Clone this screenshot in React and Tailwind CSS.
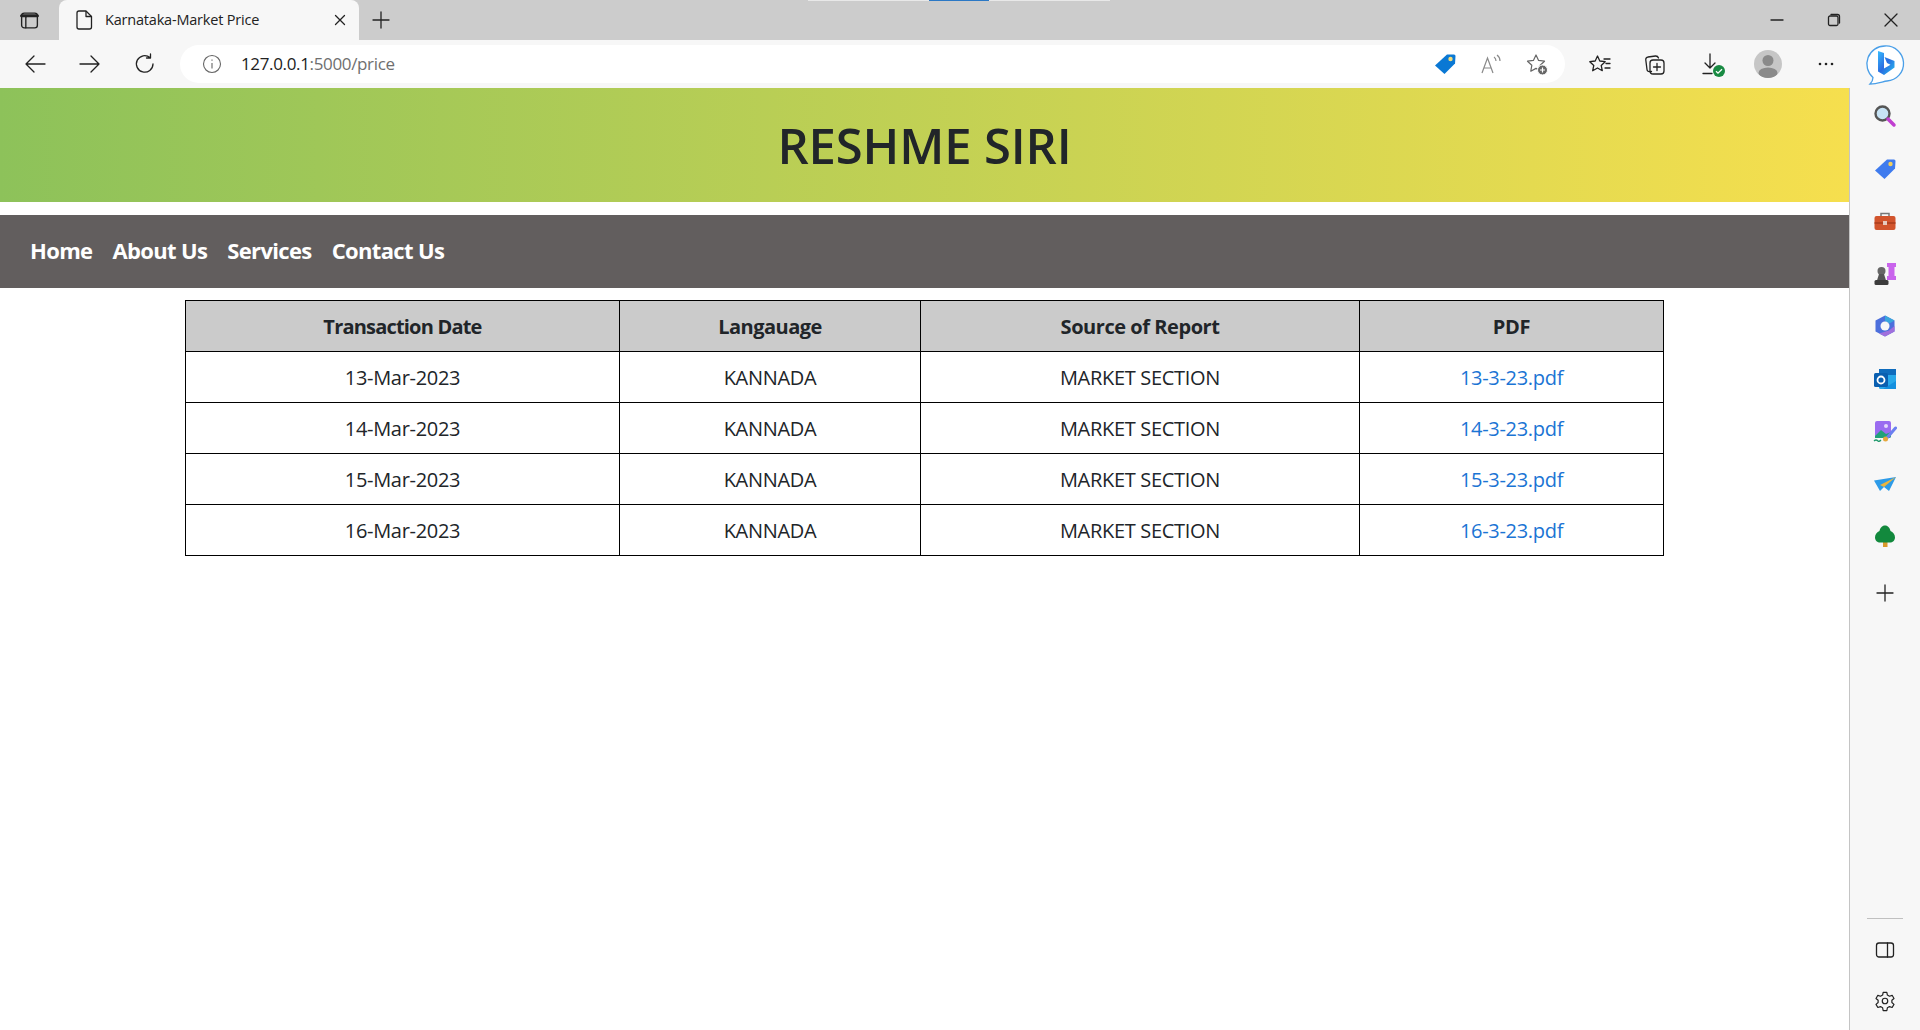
import React from "react";

const S = ({ children, w = 24, h = 24, vb = "0 0 24 24", className = "" }) => (
  <svg width={w} height={h} viewBox={vb} fill="none" stroke="#222" strokeWidth="1.3" strokeLinecap="round" strokeLinejoin="round" className={className}>
    {children}
  </svg>
);

const rows = [
  ["13-Mar-2023", "13-3-23.pdf"],
  ["14-Mar-2023", "14-3-23.pdf"],
  ["15-Mar-2023", "15-3-23.pdf"],
  ["16-Mar-2023", "16-3-23.pdf"],
];

const Ext = ({ children }) => (
  <div className="w-[24px] h-[24px] flex items-center justify-center">{children}</div>
);

export default function App() {
  return (
    <div className="w-[1920px] h-[1030px] overflow-hidden bg-white flex flex-col font-['Open_Sans','Noto_Sans',sans-serif]">
      {/* tab strip */}
      <div className="relative h-[40px] bg-[#cccccc] flex items-end shrink-0">
        <div className="absolute top-0 left-[808px] w-[302px] h-px bg-[#e8e8e8]" />
        <div className="absolute top-0 left-[929px] w-[60px] h-px bg-[#2b78c5]" />
        <div className="w-[59px] h-[40px] flex items-center justify-center">
          <S w={21} h={21} vb="0 0 20 20">
            <rect x="2.500" y="3" width="15" height="14" rx="2.500" />
            <path d="M2.500 5.500h15" strokeWidth="3" />
            <path d="M6.500 7v10" />
          </S>
        </div>
        <div className="w-[300px] h-[40px] bg-[#f7f7f7] rounded-t-[8px] flex items-center pl-[15px]">
          <svg width="21" height="24" viewBox="0 0 21 24" fill="none" stroke="#222" strokeWidth="1.300" strokeLinejoin="round">
            <path d="M5 3h7l5.500 5.500V19a2 2 0 0 1-2 2H5a2 2 0 0 1-2-2V5a2 2 0 0 1 2-2Z" />
            <path d="M12 3v5.500h5.500" />
          </svg>
          <span className="ml-[10px] text-[14.5px] text-[#222] tracking-[-0.2px] whitespace-nowrap">Karnataka-Market Price</span>
          <div className="ml-auto mr-[12px]">
            <S w={14} h={14} vb="0 0 14 14"><path d="M2.500 2.500l9 9M11.500 2.500l-9 9" /></S>
          </div>
        </div>
        <div className="h-[40px] flex items-center ml-[11px]">
          <S w={22} h={22} vb="0 0 22 22"><path d="M11 3v16M3 11h16" /></S>
        </div>
        <div className="ml-auto h-[40px] flex items-center gap-[43px] pr-[22px]">
          <S w={14} h={14} vb="0 0 14 14"><path d="M1 7h12" /></S>
          <S w={14} h={14} vb="0 0 14 14"><rect x="1.500" y="3" width="9.500" height="9.500" rx="1.500" /><path d="M4 1.500h6.500a2 2 0 0 1 2 2V10" /></S>
          <S w={14} h={14} vb="0 0 14 14"><path d="M1 1l12 12M13 1L1 13" /></S>
        </div>
      </div>

      {/* toolbar */}
      <div className="relative h-[48px] bg-[#f7f7f7] flex items-center shrink-0">
        <div className="flex items-center gap-[31px] pl-[23px]">
          <S w={24} h={24}><path d="M3 12h19M11 4l-8 8 8 8" /></S>
          <S w={24} h={24}><path d="M2 12h19M13 4l8 8-8 8" /></S>
          <S w={24} h={24}><path d="M20 12A8.300 8.300 0 1 1 17 5.500M17.500 2v4h-4" /></S>
        </div>
        <div className="ml-[23px] w-[1385px] h-[38px] bg-white rounded-[19px] flex items-center pl-[22px]">
          <svg width="20" height="20" viewBox="0 0 20 20" fill="none" stroke="#666" strokeWidth="1.100">
            <circle cx="10" cy="10" r="8.500" />
            <path d="M10 9v5.500M10 5.500v1.300" />
          </svg>
          <span className="ml-[19px] text-[17px] tracking-[-0.35px] text-[#222]">127.0.0.1<span className="text-[#6f6f6f]">:5000/price</span></span>
          <div className="ml-auto flex items-center gap-[22px] pr-[16px]">
            <Ext>
              <svg width="24" height="24" viewBox="0 0 24 24">
                <path d="M14 2.500h7a1.500 1.500 0 0 1 1.500 1.500l-.5 7.500L11.500 22 2 13.500Z" fill="#0a78d4" />
                <circle cx="17.500" cy="7" r="2.200" fill="#f2dc7c" />
              </svg>
            </Ext>
            <Ext>
              <svg width="24" height="24" viewBox="0 0 24 24" fill="none" stroke="#8a8a8a" strokeWidth="1.200">
                <path d="M3 21l5.500-15 5.500 15M5 16h7M15 5c1.500 1 2 2.500 2 4M18 3c2 1.500 3 3.500 3 6" />
              </svg>
            </Ext>
            <Ext>
              <svg width="24" height="24" viewBox="0 0 24 24" fill="none" stroke="#666" strokeWidth="1.200" strokeLinejoin="round">
                <path d="M11 3l2.600 5.400 5.900.8-4.300 4.100 1 5.900L11 16.400 5.800 19.200l1-5.900L2.500 9.200l5.900-.8Z" />
                <circle cx="17.500" cy="18" r="5" fill="#666" stroke="#fff" strokeWidth="1" />
                <path d="M17.500 15.500v5M15 18h5" stroke="#fff" />
              </svg>
            </Ext>
          </div>
        </div>
        <div className="flex items-center ml-[23px]">
          <Ext>
            <S>
              <path d="M9.500 4l2.300 5 5.400.7-4 3.700 1.100 5.300-4.800-2.700-4.800 2.700 1.100-5.300-4-3.700 5.400-.7Z" />
              <path d="M16 7h6M18 11.500h4M17 16h5" />
            </S>
          </Ext>
          <div className="ml-[31px]"><Ext>
            <S>
              <path d="M8.500 19.500l-2 .2A2.500 2.500 0 0 1 4 17.500L2.800 8a2.500 2.500 0 0 1 2.200-3l7.500-1a3 3 0 0 1 3 2" />
              <rect x="7" y="8" width="14" height="14" rx="3" />
              <path d="M14 11.500v7M10.500 15h7" />
            </S>
          </Ext></div>
          <div className="ml-[33px] relative"><Ext>
            <S>
              <path d="M10 2v14M5 11l5 5 5-5M3 21.500h9" />
            </S>
            <svg width="12" height="12" viewBox="0 0 12 12" className="absolute left-[13px] top-[13px]">
              <circle cx="6" cy="6" r="6" fill="#188a42" />
              <path d="M3 6.200l2 2 4-4" stroke="#fff" strokeWidth="1.300" fill="none" />
            </svg>
          </Ext></div>
          <div className="ml-[30px] w-[28px] h-[28px] rounded-full bg-[#c6c6c6] overflow-hidden">
            <svg width="28" height="28" viewBox="0 0 28 28">
              <circle cx="14" cy="10.500" r="5.500" fill="#8a8a8a" />
              <ellipse cx="14" cy="23" rx="9.500" ry="5.500" fill="#8a8a8a" />
            </svg>
          </div>
          <div className="ml-[32px]"><Ext>
            <svg width="24" height="24" viewBox="0 0 24 24" fill="#222">
              <circle cx="6" cy="12" r="1.300" /><circle cx="12" cy="12" r="1.300" /><circle cx="18" cy="12" r="1.300" />
            </svg>
          </Ext></div>
        </div>
        <svg width="40" height="42" viewBox="0 0 40 42" className="absolute left-[1865px] top-[4px]">
          <defs>
            <linearGradient id="bing" x1="0" y1="0" x2="1" y2="1">
              <stop offset="0" stopColor="#37bdff" />
              <stop offset="0.5" stopColor="#2a6be0" />
              <stop offset="1" stopColor="#26c2ef" />
            </linearGradient>
          </defs>
          <path d="M20 2a17.500 17.500 0 0 1 2 35c-4 .5-10 3-17 3 2-2 3-4 3-6.500A18 18 0 0 1 20 2Z" fill="#fff" stroke="#4a9fe8" strokeWidth="1.300" />
          <path d="M13 7l6 2v15.500l6.500-3.800-3.500-1.700-2.500-6L29.500 17v6.500L19 31l-6-3.500Z" fill="url(#bing)" />
        </svg>
      </div>

      {/* body */}
      <div className="flex flex-1 min-h-0">
        <main className="w-[1849px] shrink-0 flex flex-col">
          <header className="h-[114px] bg-[linear-gradient(to_right,#8dc25a,#f6df4e)] flex items-center justify-center">
            <h1 className="text-[49px] leading-none font-semibold text-[#212529] tracking-[-0.15px] pt-[1px]">RESHME SIRI</h1>
          </header>
          <nav className="mt-[13px] h-[73px] bg-[#625e5e] flex items-center pl-[30px] pb-[2px] gap-[20px] text-[22px] font-bold text-white tracking-[-0.65px]">
            <a>Home</a>
            <a>About Us</a>
            <a>Services</a>
            <a>Contact Us</a>
          </nav>
          <div className="mt-[12px] pl-[185px]">
            <table className="w-[1478px] table-fixed border-collapse text-[20px] tracking-[-0.3px] text-[#212529] text-center">
              <colgroup>
                <col className="w-[434px]" />
                <col className="w-[301px]" />
                <col className="w-[439px]" />
                <col className="w-[304px]" />
              </colgroup>
              <thead>
                <tr className="h-[51px] bg-[#cbcbcb]">
                  <th className="border border-black font-bold pt-[2px] tracking-[-0.8px]">Transaction Date</th>
                  <th className="border border-black font-bold pt-[2px] tracking-[-0.5px]">Langauage</th>
                  <th className="border border-black font-bold pt-[2px] tracking-[-0.45px]">Source of Report</th>
                  <th className="border border-black font-bold pt-[2px]">PDF</th>
                </tr>
              </thead>
              <tbody>
                {rows.map(([d, f]) => (
                  <tr key={d} className="h-[51px]">
                    <td className="border border-black pt-[2px]">{d}</td>
                    <td className="border border-black pt-[2px]">KANNADA</td>
                    <td className="border border-black pt-[2px]">MARKET SECTION</td>
                    <td className="border border-black pt-[2px]"><a className="text-[#1b74d4]">{f}</a></td>
                  </tr>
                ))}
              </tbody>
            </table>
          </div>
        </main>

        {/* sidebar */}
        <aside className="w-[71px] shrink-0 bg-[#f7f7f7] border-l border-[#c4c4c4] flex flex-col items-center pt-[16px] pr-[1px]">
          <div className="flex flex-col items-center gap-[28.5px]">
            <svg width="24" height="24" viewBox="0 0 24 24" fill="none">
              <circle cx="9.500" cy="9.500" r="7" fill="#c7e3f5" stroke="#555" strokeWidth="2.400" />
              <path d="M15 15l6 6" stroke="#c03fd0" strokeWidth="3.500" strokeLinecap="round" />
            </svg>
            <svg width="24" height="24" viewBox="0 0 24 24">
              <path d="M14 2.500h7a1.500 1.500 0 0 1 1.500 1.500l-.5 7.500L11.500 22 2 13.500Z" fill="#3f7bee" />
              <circle cx="17.500" cy="7" r="2.200" fill="#f2cf5c" />
            </svg>
            <svg width="24" height="24" viewBox="0 0 24 24" fill="none">
              <path d="M8 7V4.500h8V7" stroke="#777" strokeWidth="1.500" />
              <rect x="1.500" y="7" width="21" height="14" rx="2" fill="#d2542c" />
              <path d="M1.500 14h21" stroke="#a93d1c" strokeWidth="1.500" />
              <rect x="10" y="12" width="4" height="4" fill="#e6c9bd" />
            </svg>
            <svg width="24" height="24" viewBox="0 0 24 24">
              <rect x="14" y="1" width="9" height="4" fill="#c964ec" />
              <rect x="15.500" y="5" width="6" height="9" fill="#c964ec" />
              <rect x="14" y="14" width="9" height="4" fill="#c964ec" />
              <circle cx="8.500" cy="9" r="4" fill="#666" />
              <path d="M6 12h5l2 6.500H4Z" fill="#555" />
              <rect x="1.500" y="18" width="14" height="5" rx="1.500" fill="#3c3c3c" />
            </svg>
            <svg width="24" height="24" viewBox="0 0 24 24" fill="none">
              <path d="M12 1.500l9.500 5v11l-9.500 5-9.500-5v-11Z" fill="#4c6fdc" />
              <path d="M12 1.500l9.500 5-5 3L12 7Z" fill="#3aa6dc" />
              <path d="M21.500 12v5.500L12 22.500l-6-3 10-3Z" fill="#a06fdc" />
              <circle cx="12" cy="12" r="4.500" fill="#f7f7f7" />
            </svg>
            <svg width="24" height="24" viewBox="0 0 24 24">
              <rect x="6" y="2" width="17" height="20" rx="1.500" fill="#28a8ea" />
              <rect x="6" y="2" width="17" height="6" fill="#0f6cbd" />
              <path d="M10 22l13-8v8Z" fill="#1490df" />
              <rect x="1" y="6" width="14" height="14" rx="1.500" fill="#0a5fb0" />
              <circle cx="8" cy="13" r="3.500" fill="none" stroke="#fff" strokeWidth="1.800" />
            </svg>
            <svg width="24" height="24" viewBox="0 0 24 24">
              <rect x="2" y="2" width="16" height="17" rx="2" fill="#9a6cf0" />
              <path d="M2 17l6-6 5 4 5-2v4a2 2 0 0 1-2 2H2Z" fill="#21a179" />
              <circle cx="13" cy="7" r="2" fill="#e4d9fb" />
              <path d="M13 20L22.500 9" stroke="#6b7ff0" strokeWidth="3" strokeLinecap="round" />
              <circle cx="12.500" cy="20" r="2.500" fill="#e6a83c" />
              <path d="M1 22c2-2 3-1 4 0s2 0 3-1" stroke="#1f9a6c" strokeWidth="1.200" fill="none" />
            </svg>
            <svg width="24" height="24" viewBox="0 0 24 24">
              <path d="M1 8.500L23 5l-7 14-5-4-4 4Z" fill="#2d9be8" />
              <path d="M7 13L23 5 11 15Z" fill="#edb53c" />
            </svg>
            <svg width="24" height="24" viewBox="0 0 24 24">
              <rect x="10" y="17" width="4.500" height="6" fill="#d99a2b" />
              <path d="M12 1.500c3 0 5 2.500 5.500 5.500 2.500 1 4.500 3.500 4.500 6.500 0 3-2.500 5-5 5H7c-2.500 0-5-2-5-5 0-3 2-5.500 4.500-6.500C7 4 9 1.500 12 1.500Z" fill="#12893d" />
            </svg>
            <S w={22} h={22} vb="0 0 22 22" className="mt-[5px]"><path d="M11 3v16M3 11h16" /></S>
          </div>
          <div className="mt-auto w-[36px] h-px bg-[#c0c0c0] mb-[21px]" />
          <S w={20} h={20} vb="0 0 20 20">
            <rect x="1.500" y="3" width="17" height="14" rx="2.500" />
            <path d="M12.500 3v14" />
          </S>
          <div className="mt-[30px] mb-[18px]">
            <S w={22} h={22} vb="0 0 24 24">
              <circle cx="12" cy="12" r="3" />
              <path d="M10 2.500h4l.6 3 2.300 1.300 2.900-1 2 3.400-2.300 2v2.500l2.300 2-2 3.400-2.900-1-2.300 1.300-.6 3h-4l-.6-3-2.300-1.300-2.900 1-2-3.400 2.300-2v-2.500l-2.300-2 2-3.400 2.900 1L9.400 5.500Z" />
            </S>
          </div>
        </aside>
      </div>
    </div>
  );
}
